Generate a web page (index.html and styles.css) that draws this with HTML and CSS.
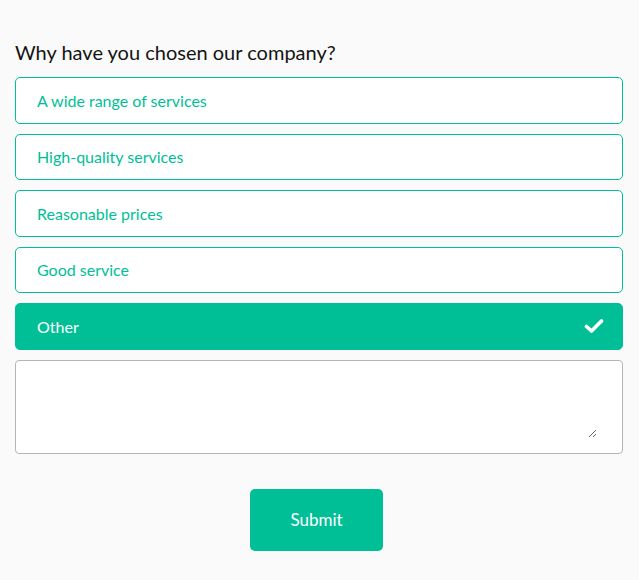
FILE: index.html
```html
<!DOCTYPE html>
<html>
<head>
<meta charset="utf-8">
<link rel="stylesheet" href="styles.css">
</head>
<body>
<form class="survey">
  <h2 class="question">Why have you chosen our company?</h2>
  <div class="options">
    <div class="option">A wide range of services</div>
    <div class="option">High-quality services</div>
    <div class="option">Reasonable prices</div>
    <div class="option">Good service</div>
    <div class="option selected">Other
      <svg class="check" width="20" height="16" viewBox="0 0 20 16"><path d="M2.5 8.5 L7.5 13 L17.5 3" fill="none" stroke="#fff" stroke-width="3.6" stroke-linecap="round" stroke-linejoin="round"/></svg>
    </div>
  </div>
  <div class="other-box">
    <textarea class="other-text"></textarea>
  </div>
  <div class="actions">
    <button type="button" class="submit">Submit</button>
  </div>
</form>
</body>
</html>
```
FILE: styles.css
```css
html, body {
  margin: 0;
  padding: 0;
  background: #fafafa;
}
body {
  font-family: Lato, "Noto Sans", sans-serif;
}
.survey {
  padding: 38px 16px 0 15px;
}
.question {
  margin: 0 0 11px 0;
  font-size: 20px;
  font-weight: 400;
  color: #141414;
  line-height: 28px;
}
.options {
  display: flex;
  flex-direction: column;
  gap: 10px;
}
.option {
  height: 44.5px;
  border: 1px solid #00bf96;
  border-radius: 5px;
  background: #fff;
  color: #00bf96;
  font-size: 16px;
  display: flex;
  align-items: center;
  justify-content: space-between;
  padding: 0 18px 0 21px;
}
.option.selected {
  background: #00bf96;
  color: #fff;
}
.check {
  display: block;
}
.other-box {
  box-sizing: border-box;
  height: 94px;
  margin-top: 10px;
  padding: 14px 25px 15px 20px;
  border: 1px solid #b5b5b5;
  border-radius: 4px;
  background: #fff;
}
.other-text {
  display: block;
  box-sizing: border-box;
  width: 100%;
  height: 100%;
  margin: 0;
  padding: 0;
  border: none;
  outline: none;
  background: transparent;
  resize: vertical;
}
.actions {
  display: flex;
  justify-content: center;
  padding-top: 35px;
}
.submit {
  width: 133px;
  height: 62px;
  margin-right: 5px;
  border: none;
  border-radius: 5px;
  background: #00bf96;
  color: #fff;
  font-family: Lato, "Noto Sans", sans-serif;
  font-size: 17px;
}
```
